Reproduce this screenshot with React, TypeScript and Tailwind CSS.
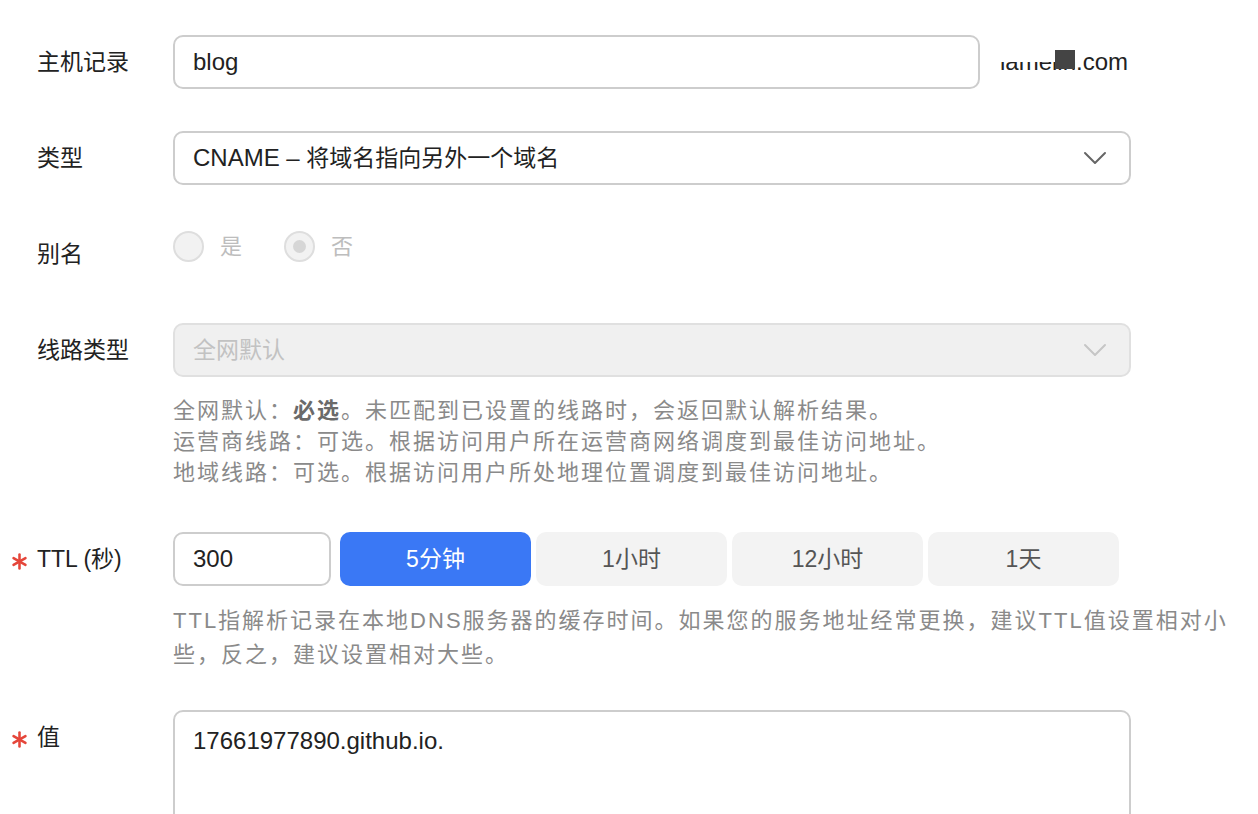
import React from 'react';

const font = { fontFamily: '"Liberation Sans", "Noto Sans CJK SC", sans-serif' };

const Chevron = ({ color = '#666' }: { color?: string }) => (
  <svg width="24" height="14" viewBox="0 0 24 14" fill="none">
    <path d="M2 2l10 10L22 2" stroke={color} strokeWidth="2" strokeLinecap="round" strokeLinejoin="round" />
  </svg>
);

// red required mark, six arms
const Star = () => (
  <svg width="17" height="17" viewBox="0 0 16 16" fill="none">
    <g stroke="#e5463a" strokeWidth="2.4" strokeLinecap="round">
      <path d="M8 1.5v13" />
      <path d="M2.4 4.8l11.2 6.4" />
      <path d="M13.6 4.8L2.4 11.2" />
    </g>
  </svg>
);

const Label: React.FC<{ text: string; required?: boolean }> = ({ text, required }) => (
  <div className="w-[173px] shrink-0 flex items-center h-[54px] pl-[11px] text-[23px] text-[#222]">
    <span className="w-[26px] flex items-center pt-[4px]">{required ? <Star /> : null}</span>
    <span>{text}</span>
  </div>
);

const ttlOptions = ['5分钟', '1小时', '12小时', '1天'];

export default function App() {
  const [ttl, setTtl] = React.useState('5分钟');

  return (
    <div className="bg-white w-[1258px] h-[814px] overflow-hidden pt-[35px]" style={font}>
      {/* 主机记录 */}
      <div className="flex items-center">
        <Label text="主机记录" />
        <div className="w-[807px] h-[54px] border-2 border-[#cdcdcd] rounded-[10px] flex items-center pl-[18px] text-[24px] text-[#222]">
          blog
        </div>
        <div className="ml-[20px] text-[24px] text-[#222] flex items-center">
          <span className="relative inline-block">
            lamelin
            <span className="absolute left-0 right-0 top-0 h-[18px] bg-white" />
            <span className="absolute left-[55px] top-[6px] w-[20px] h-[19px] bg-[#444]" />
          </span>
          <span>.com</span>
        </div>
      </div>

      {/* 类型 */}
      <div className="flex items-center mt-[42px]">
        <Label text="类型" />
        <div className="w-[958px] h-[54px] border-2 border-[#cdcdcd] rounded-[10px] flex items-center justify-between pl-[18px] pr-[22px] text-[23px] text-[#222]">
          <span>
            <span className="text-[24px]">CNAME – </span>将域名指向另外一个域名
          </span>
          <Chevron />
        </div>
      </div>

      {/* 别名 */}
      <div className="flex items-start mt-[42px] h-[54px]">
        <Label text="别名" />
        <div className="flex items-center pt-[3px] text-[22px] text-[#bdbdbd]">
          <span className="w-[31px] h-[31px] rounded-full border-2 border-[#dedede] bg-[#f2f2f2]" />
          <span className="ml-[16px]">是</span>
          <span className="ml-[42px] w-[31px] h-[31px] rounded-full border-2 border-[#dedede] bg-[#f2f2f2] flex items-center justify-center">
            <span className="w-[13px] h-[13px] rounded-full bg-[#d6d6d6]" />
          </span>
          <span className="ml-[16px]">否</span>
        </div>
      </div>

      {/* 线路类型 */}
      <div className="flex items-start mt-[42px]">
        <Label text="线路类型" />
        <div>
          <div className="w-[958px] h-[54px] border-2 border-[#e0e0e0] bg-[#f0f0f0] rounded-[10px] flex items-center justify-between pl-[18px] pr-[22px] text-[23px] text-[#c2c2c2]">
            <span>全网默认</span>
            <Chevron color="#c6c6c6" />
          </div>
          <div className="mt-[18px] text-[22px] tracking-[2px] leading-[31px] text-[#8a8a8a]">
            <p>
              全网默认：<span className="font-bold text-[#6a6a6a]">必选</span>。未匹配到已设置的线路时，会返回默认解析结果。
            </p>
            <p>运营商线路：可选。根据访问用户所在运营商网络调度到最佳访问地址。</p>
            <p>地域线路：可选。根据访问用户所处地理位置调度到最佳访问地址。</p>
          </div>
        </div>
      </div>

      {/* TTL */}
      <div className="flex items-start mt-[44px]">
        <Label text="TTL (秒)" required />
        <div>
          <div className="flex items-center">
            <div className="w-[158px] h-[54px] border-2 border-[#cdcdcd] rounded-[10px] flex items-center pl-[18px] text-[24px] text-[#222]">
              300
            </div>
            <div className="flex gap-[5px] ml-[9px]">
              {ttlOptions.map((o) => (
                <button
                  key={o}
                  onClick={() => setTtl(o)}
                  className={
                    o === ttl
                      ? 'w-[191px] h-[54px] rounded-[10px] bg-[#3a78f5] text-white text-[23px]'
                      : 'w-[191px] h-[54px] rounded-[10px] bg-[#f3f3f3] text-[#555] text-[23px]'
                  }
                >
                  {o}
                </button>
              ))}
            </div>
          </div>
          <p className="mt-[18px] w-[1062px] text-[22px] tracking-[2px] leading-[34px] text-[#8a8a8a]">
            TTL指解析记录在本地DNS服务器的缓存时间。如果您的服务地址经常更换，建议TTL值设置相对小些，反之，建议设置相对大些。
          </p>
        </div>
      </div>

      {/* 值 */}
      <div className="flex items-start mt-[38px]">
        <Label text="值" required />
        <div className="w-[958px] h-[140px] border-2 border-[#cdcdcd] rounded-[10px] pl-[18px] pt-[11px] text-[24px] text-[#222]">
          17661977890.github.io.
        </div>
      </div>
    </div>
  );
}
